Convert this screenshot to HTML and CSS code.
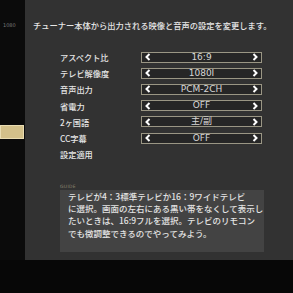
FILE: index.html
```html
<!DOCTYPE html>
<html lang="ja">
<head>
<meta charset="utf-8">
<link rel="stylesheet" href="styles.css">
</head>
<body>
<div class="screen">
  <aside class="sidebar">
    <div class="side-label">1080</div>
    <div class="side-active"></div>
  </aside>
  <main class="panel">
    <div class="title">チューナー本体から出力される映像と音声の設定を変更します。</div>
    <div class="settings">
      <div class="row"><span class="label">アスペクト比</span><div class="select"><svg class="arr" viewBox="0 0 6 8"><polyline points="4.5,1 1.5,4 4.5,7"/></svg><span class="val">16:9</span><svg class="arr" viewBox="0 0 6 8"><polyline points="1.5,1 4.5,4 1.5,7"/></svg></div></div>
      <div class="row"><span class="label">テレビ解像度</span><div class="select"><svg class="arr" viewBox="0 0 6 8"><polyline points="4.5,1 1.5,4 4.5,7"/></svg><span class="val">1080I</span><svg class="arr" viewBox="0 0 6 8"><polyline points="1.5,1 4.5,4 1.5,7"/></svg></div></div>
      <div class="row"><span class="label">音声出力</span><div class="select"><svg class="arr" viewBox="0 0 6 8"><polyline points="4.5,1 1.5,4 4.5,7"/></svg><span class="val">PCM-2CH</span><svg class="arr" viewBox="0 0 6 8"><polyline points="1.5,1 4.5,4 1.5,7"/></svg></div></div>
      <div class="row"><span class="label">省電力</span><div class="select"><svg class="arr" viewBox="0 0 6 8"><polyline points="4.5,1 1.5,4 4.5,7"/></svg><span class="val">OFF</span><svg class="arr" viewBox="0 0 6 8"><polyline points="1.5,1 4.5,4 1.5,7"/></svg></div></div>
      <div class="row"><span class="label">2ヶ国語</span><div class="select"><svg class="arr" viewBox="0 0 6 8"><polyline points="4.5,1 1.5,4 4.5,7"/></svg><span class="val">主/副</span><svg class="arr" viewBox="0 0 6 8"><polyline points="1.5,1 4.5,4 1.5,7"/></svg></div></div>
      <div class="row"><span class="label">CC字幕</span><div class="select"><svg class="arr" viewBox="0 0 6 8"><polyline points="4.5,1 1.5,4 4.5,7"/></svg><span class="val">OFF</span><svg class="arr" viewBox="0 0 6 8"><polyline points="1.5,1 4.5,4 1.5,7"/></svg></div></div>
      <div class="row"><span class="label">設定適用</span></div>
    </div>
    <div class="guide-tag">GUIDE</div>
    <div class="guide">テレビが4：3標準テレビか16：9ワイドテレビ<br>に選択。画面の左右にある黒い帯をなくして表示し<br>たいときは、16:9フルを選択。テレビのリモコン<br>でも微調整できるのでやってみよう。</div>
  </main>
</div>
</body>
</html>
```

FILE: styles.css
```css
html, body {
  margin: 0;
  padding: 0;
  background: #070707;
  width: 293px;
  height: 293px;
  overflow: hidden;
  font-family: "Noto Sans CJK JP", "Noto Sans", sans-serif;
}

.screen {
  display: flex;
  height: 260px;
}

.sidebar {
  width: 25px;
  flex: none;
  background: #0b0b0b;
  display: flex;
  flex-direction: column;
}

.side-label {
  margin-top: 22px;
  margin-left: 3px;
  font-family: "DejaVu Sans", sans-serif;
  font-size: 5px;
  line-height: 6px;
  color: #7a7a7a;
}

.side-active {
  margin-top: 97px;
  width: 22px;
  height: 12px;
  background: #d3c08a;
  border: 1px solid #e9dcb2;
}

.panel {
  flex: 1;
  background: #323232;
  padding: 19px 0 0 8px;
  display: flex;
  flex-direction: column;
}

.title {
  font-size: 8.25px;
  font-weight: 500;
  line-height: 12px;
  color: #e6e6e6;
  white-space: nowrap;
}

.settings {
  margin-top: 18px;
  margin-left: 27px;
  display: flex;
  flex-direction: column;
}

.row {
  height: 16.2px;
  display: flex;
  align-items: center;
}

.label {
  width: 81px;
  font-size: 8.2px;
  font-weight: 500;
  color: #e6e6e6;
  white-space: nowrap;
}

.select {
  height: 9px;
  width: 113px;
  border: 1px solid #9a9684;
  background: #262626;
  display: flex;
  align-items: center;
  justify-content: space-between;
  padding: 0 3px;
  box-sizing: content-box;
}

.arr {
  width: 6px;
  height: 8px;
  fill: none;
  stroke: #ffffff;
  stroke-width: 2;
}

.val {
  font-family: "DejaVu Sans", "Noto Sans CJK JP", sans-serif;
  font-size: 9px;
  line-height: 9px;
  color: #d6d6d6;
}

.guide-tag {
  margin-top: 21.5px;
  margin-left: 27px;
  font-family: "DejaVu Sans", sans-serif;
  font-size: 4.5px;
  line-height: 6px;
  color: #8a8470;
  letter-spacing: 0.3px;
}

.guide {
  margin-left: 27px;
  width: 196px;
  height: 62px;
  padding-left: 8px;
  background: #434343;
  font-size: 8.5px;
  font-weight: 500;
  line-height: 12.3px;
  color: #e4e4e4;
  white-space: nowrap;
}
```
